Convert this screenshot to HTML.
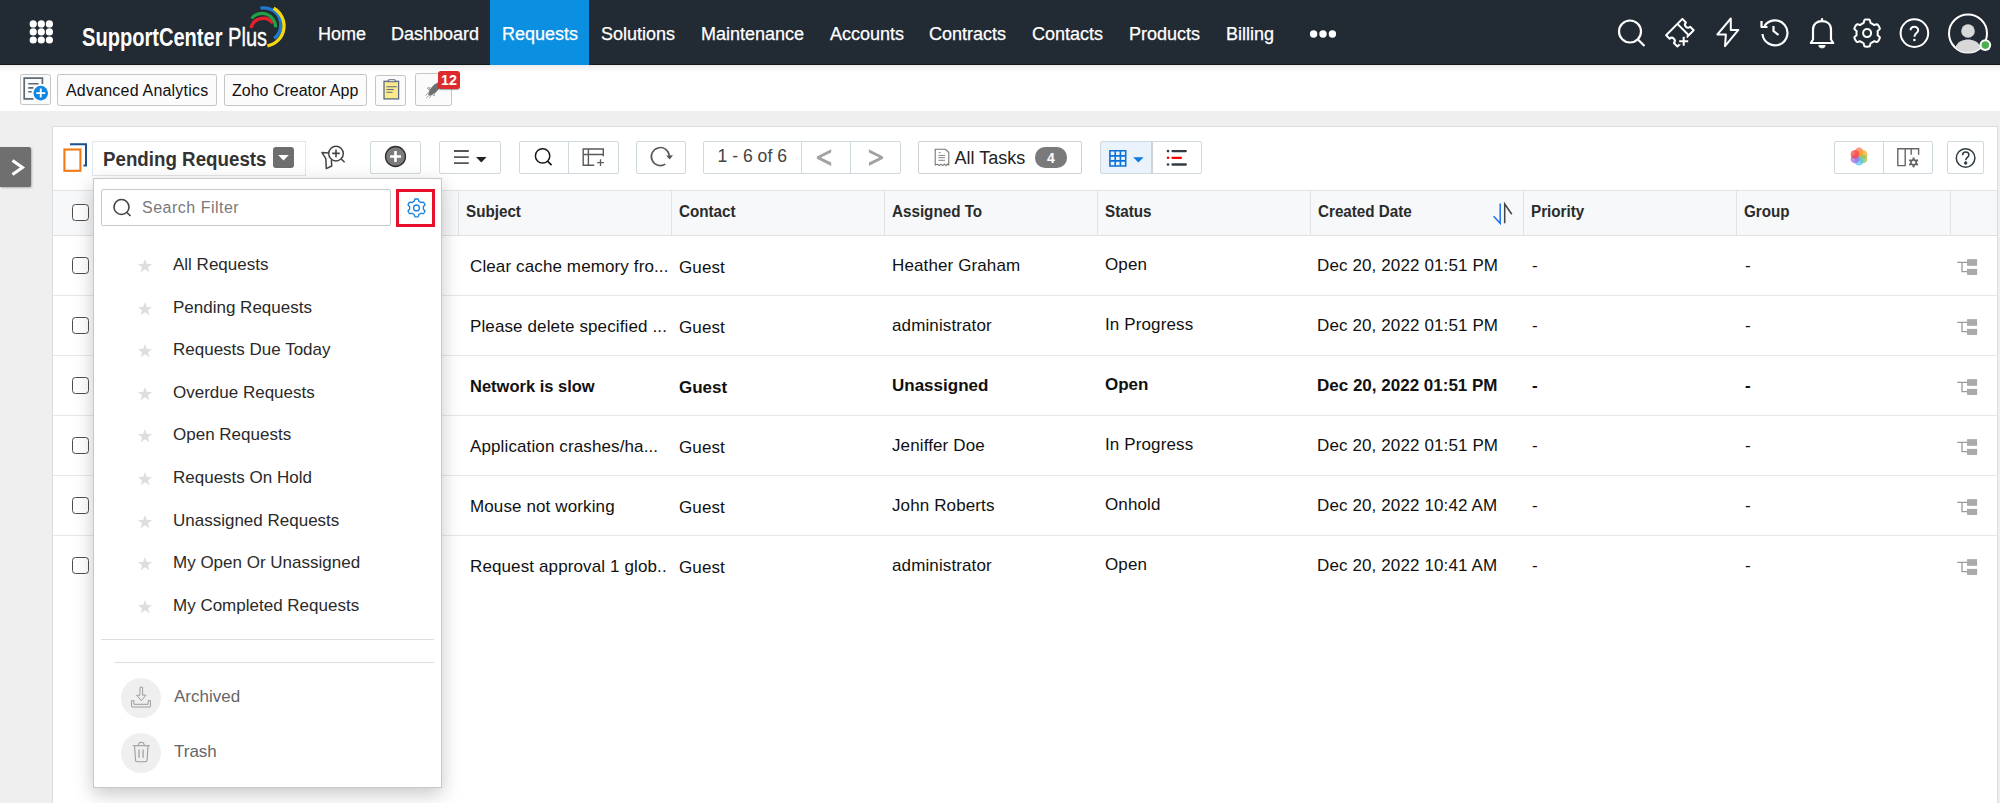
<!DOCTYPE html>
<html><head><meta charset="utf-8">
<style>
*{box-sizing:border-box;margin:0;padding:0}
html,body{width:2000px;height:803px;overflow:hidden;background:#efefef;font-family:"Liberation Sans",sans-serif;color:#222;position:relative}
.a{position:absolute}
.t{position:absolute;white-space:nowrap;line-height:1}
#hdr{left:0;top:0;width:2000px;height:65px;background:#222a33;border-bottom:1px solid #11161b}
.nav{color:#fff;font-size:18px;top:25px;-webkit-text-stroke:.25px #fff}
#tb{left:0;top:65px;width:2000px;height:46px;background:linear-gradient(#ececec,#fff 7px)}
.btn{position:absolute;border:1px solid #c6c6c6;border-radius:2.5px;background:#fbfbfb;box-shadow:0 0 1px rgba(0,0,0,.08)}
#panel{left:52px;top:126px;width:1946px;height:700px;background:#fff;border:1px solid #dcdcdc}
.pbtn{position:absolute;border:1.5px solid #d0d9dd;border-radius:2px;background:#fff;top:141px;height:33px}
#thead{left:53px;top:190px;width:1944px;height:46px;background:#f6f8f9;border-top:1px solid #e3e3e3;border-bottom:1px solid #e0e0e0}
.th{font-size:16px;font-weight:700;color:#2b2b2b;top:204px;transform:scaleX(.95);transform-origin:0 0}
.vsep{position:absolute;top:191px;width:1px;height:44px;background:#e3e3e3}
.rsep{position:absolute;left:53px;width:1944px;height:1px;background:#e8e8e8}
.td{font-size:17px;color:#111;letter-spacing:.12px}
.bd{font-weight:700;letter-spacing:0}
.bs{transform:scaleX(.97);transform-origin:0 0}
.cb{position:absolute;left:72px;width:17px;height:17px;border:1.8px solid #4d4d4d;border-radius:3.5px;background:#fff}
#pop{left:93px;top:178px;width:349px;height:610px;background:#fff;border:1px solid #c8c8c8;box-shadow:0 6px 18px rgba(0,0,0,.22)}
.li{font-size:17px;color:#2a2a2a;left:173px}
.star{position:absolute;left:136.5px;width:16px;height:16px}
</style></head><body>
<!-- HEADER -->
<div id="hdr" class="a">
<svg class="a" style="left:24px;top:16px" width="34" height="32" viewBox="24 16 34 32" fill="#fff"><circle cx="33.2" cy="23.9" r="3.6"/><circle cx="41.3" cy="23.9" r="3.6"/><circle cx="49.4" cy="23.9" r="3.6"/><circle cx="33.2" cy="31.95" r="3.6"/><circle cx="41.3" cy="31.95" r="3.6"/><circle cx="49.4" cy="31.95" r="3.6"/><circle cx="33.2" cy="40.0" r="3.6"/><circle cx="41.3" cy="40.0" r="3.6"/><circle cx="49.4" cy="40.0" r="3.6"/></svg>
<div class="t" id="logo" style="left:81.5px;top:24.8px;font-size:25px;color:#fff;transform:scaleX(.803);transform-origin:0 0"><b>SupportCenter</b> <span style="-webkit-text-stroke:.35px #fff">Plus</span></div>
<svg class="a" style="left:240px;top:0px" width="60" height="55" viewBox="240 0 60 55" fill="none" stroke-linecap="butt">
<path d="M251 28 A12.3 12.3 0 0 1 272.9 23.3" stroke="#e3202b" stroke-width="3.3"/>
<path d="M251.6 18.5 A13.5 13.5 0 0 1 275.6 27.4" stroke="#1fa045" stroke-width="3.3"/>
<path d="M260.5 8.2 A17 17 0 0 1 274.2 38.4" stroke="#1d7ad0" stroke-width="3.3"/>
<path d="M273.6 8.2 A20.3 20.3 0 0 1 267.4 45.9" stroke="#f5d90f" stroke-width="3.3"/>
</svg>
<div class="a" style="left:490px;top:0;width:99px;height:65px;background:#0b8fe0"></div>
<div class="t nav" style="left:318px">Home</div>
<div class="t nav" style="left:391px">Dashboard</div>
<div class="t nav" style="left:502px">Requests</div>
<div class="t nav" style="left:601px">Solutions</div>
<div class="t nav" style="left:701px">Maintenance</div>
<div class="t nav" style="left:830px">Accounts</div>
<div class="t nav" style="left:929px">Contracts</div>
<div class="t nav" style="left:1032px">Contacts</div>
<div class="t nav" style="left:1129px">Products</div>
<div class="t nav" style="left:1226px">Billing</div>
<svg class="a" style="left:1309px;top:28px" width="28" height="12" viewBox="0 0 28 12" fill="#fff"><circle cx="4.6" cy="6" r="3.7"/><circle cx="14" cy="6" r="3.7"/><circle cx="23.4" cy="6" r="3.7"/></svg>
<!-- right icons -->
<svg class="a" style="left:1615px;top:16px" width="34" height="34" viewBox="0 0 34 34" fill="none" stroke="#fff" stroke-width="2.2"><circle cx="15" cy="15.5" r="11"/><path d="M23 23.5 L29.5 30"/></svg>
<svg class="a" style="left:1660px;top:14px" width="40" height="38" viewBox="1660 14 40 38" fill="none" stroke-width="2" stroke-linejoin="round">
<g transform="translate(1679.9 32.7) rotate(-45) translate(-11.5 -8)" stroke="#fff">
<path d="M0 0 H23 V5 A3 3 0 0 0 23 11 V16 H0 V11 A3 3 0 0 0 0 5 Z"/><path d="M16 0 V16"/>
</g>
<path d="M1683.7 36.2 V46.2 M1678.7 41.2 H1688.7" stroke="#222a33" stroke-width="6"/>
<path d="M1683.7 36.7 V45.7 M1679.2 41.2 H1688.2" stroke="#fff" stroke-width="2"/>
</svg>
<svg class="a" style="left:1713px;top:15px" width="30" height="34" viewBox="0 0 30 34" fill="none" stroke="#fff" stroke-width="2" stroke-linejoin="round"><path d="M17.8 3.5 L4.4 19.4 H12.9 L12 31.2 L25.4 14.9 H17.8 Z"/></svg>
<svg class="a" style="left:1758px;top:16px" width="34" height="32" viewBox="0 0 34 32" fill="none" stroke="#fff" stroke-width="2.2"><path d="M6.5 10 A12.5 12.5 0 1 1 4.5 18"/><path d="M3.5 5 V11 H9.5" stroke-linejoin="round"/><path d="M15.5 10 V15 L20.5 19"/></svg>
<svg class="a" style="left:1808px;top:15px" width="30" height="36" viewBox="0 0 30 36" fill="none" stroke="#fff" stroke-width="2.2" stroke-linejoin="round"><path d="M14 3.2 V6"/><path d="M2.8 28 L5 24.5 V14.5 C5 9 9 6.2 14 6.2 C19 6.2 23 9 23 14.5 V24.5 L25.2 28 Z"/><path d="M10.8 30.6 H17.2 C17.2 33.6 10.8 33.6 10.8 30.6 Z" fill="#fff" stroke-width="1"/></svg>
<svg class="a" style="left:1850px;top:16px" width="34" height="34" viewBox="0 0 34 34" fill="none" stroke="#fff" stroke-width="2" stroke-linejoin="round"><path d="M17.1 3.5 L17.7 3.5 L18.3 3.6 L18.9 3.6 L19.5 3.7 L19.9 4.3 L20.2 5.4 L20.4 6.5 L20.7 7.1 L21.2 7.3 L21.6 7.5 L22.0 7.7 L22.4 7.9 L22.8 8.2 L23.2 8.4 L23.6 8.7 L23.9 9.0 L24.6 8.9 L25.7 8.5 L26.8 8.3 L27.5 8.4 L27.9 8.8 L28.2 9.3 L28.6 9.8 L28.9 10.3 L29.2 10.8 L29.4 11.4 L29.7 11.9 L29.9 12.5 L29.6 13.2 L28.8 14.0 L27.9 14.7 L27.5 15.3 L27.6 15.7 L27.7 16.2 L27.7 16.6 L27.7 17.1 L27.7 17.6 L27.7 18.0 L27.6 18.5 L27.5 18.9 L27.9 19.5 L28.8 20.2 L29.6 21.0 L29.9 21.7 L29.7 22.3 L29.4 22.8 L29.2 23.4 L28.9 23.9 L28.6 24.4 L28.2 24.9 L27.9 25.4 L27.5 25.8 L26.8 25.9 L25.7 25.7 L24.6 25.3 L23.9 25.2 L23.6 25.5 L23.2 25.8 L22.8 26.0 L22.4 26.3 L22.0 26.5 L21.6 26.7 L21.2 26.9 L20.7 27.1 L20.4 27.7 L20.2 28.8 L19.9 29.9 L19.5 30.5 L18.9 30.6 L18.3 30.6 L17.7 30.7 L17.1 30.7 L16.5 30.7 L15.9 30.6 L15.3 30.6 L14.7 30.5 L14.3 29.9 L14.0 28.8 L13.8 27.7 L13.5 27.1 L13.0 26.9 L12.6 26.7 L12.2 26.5 L11.8 26.3 L11.4 26.0 L11.0 25.8 L10.6 25.5 L10.3 25.2 L9.6 25.3 L8.5 25.7 L7.4 25.9 L6.7 25.8 L6.3 25.4 L6.0 24.9 L5.6 24.4 L5.3 23.9 L5.0 23.4 L4.8 22.8 L4.5 22.3 L4.3 21.7 L4.6 21.0 L5.4 20.2 L6.3 19.5 L6.7 18.9 L6.6 18.5 L6.5 18.0 L6.5 17.6 L6.5 17.1 L6.5 16.6 L6.5 16.2 L6.6 15.7 L6.7 15.3 L6.3 14.7 L5.4 14.0 L4.6 13.2 L4.3 12.5 L4.5 11.9 L4.8 11.4 L5.0 10.8 L5.3 10.3 L5.6 9.8 L6.0 9.3 L6.3 8.8 L6.7 8.4 L7.4 8.3 L8.5 8.5 L9.6 8.9 L10.3 9.0 L10.6 8.7 L11.0 8.4 L11.4 8.2 L11.8 7.9 L12.2 7.7 L12.6 7.5 L13.0 7.3 L13.5 7.1 L13.8 6.5 L14.0 5.4 L14.3 4.3 L14.7 3.7 L15.3 3.6 L15.9 3.6 L16.5 3.5Z"/><circle cx="17.1" cy="17.1" r="4"/></svg>
<svg class="a" style="left:1898px;top:17px" width="34" height="34" viewBox="0 0 34 34" fill="none" stroke="#fff" stroke-width="2"><circle cx="16.4" cy="16.1" r="13.8"/><path d="M12.6 13.3 C12.6 10.9 14.3 9.7 16.4 9.7 C18.5 9.7 20.2 11.2 20.2 13.2 C20.2 16 16.4 16.2 16.4 19.8"/><circle cx="16.4" cy="23" r="1.3" fill="#fff" stroke="none"/></svg>
<svg class="a" style="left:1945px;top:11px" width="50" height="46" viewBox="0 0 50 46"><circle cx="23" cy="22.5" r="19" fill="none" stroke="#fff" stroke-width="2"/><circle cx="23" cy="20" r="6.8" fill="#d8d8d8"/><path d="M10.2 36.5 C12.5 30.5 18 28.5 23 28.5 C28 28.5 33.5 30.5 35.8 36.5 C32 40 28 41.5 23 41.5 C18 41.5 14 40 10.2 36.5Z" fill="#d8d8d8"/><circle cx="40.3" cy="34.1" r="5.9" fill="#fff"/><circle cx="40.3" cy="34.1" r="3.8" fill="#4caf50"/></svg>
</div>
<!-- TOOLBAR -->
<div id="tb" class="a">
<div class="btn" style="left:20px;top:9px;width:31px;height:31px"></div>
<div class="btn" style="left:57px;top:9px;width:160px;height:32px"></div>
<div class="t" style="left:66px;top:18px;font-size:16px;color:#111;letter-spacing:.2px">Advanced Analytics</div>
<div class="btn" style="left:224px;top:9px;width:143px;height:32px"></div>
<div class="t" style="left:232px;top:18px;font-size:16px;color:#111">Zoho Creator App</div>
<div class="btn" style="left:375px;top:10px;width:31px;height:31px"></div>
<div class="btn" style="left:415px;top:8px;width:37px;height:33px"></div>
</div>
<!-- toolbar icons -->
<svg class="a" style="left:15px;top:66px" width="40" height="44" viewBox="15 66 40 44">
<path d="M42.4 84 V78.2 H24.2 V98.8 H33.5" fill="none" stroke="#5f6b74" stroke-width="1.7"/>
<path d="M28.2 83.8 H38.6 M28.2 87.9 H33.4 M28.2 91.8 H31.7" stroke="#5f6b74" stroke-width="1.6"/>
<circle cx="40.75" cy="93.1" r="8.3" fill="#fff"/>
<circle cx="40.75" cy="93.1" r="7.3" fill="#0f87e0"/>
<path d="M40.75 88.6 V97.6 M36.25 93.1 H45.25" stroke="#fff" stroke-width="1.9"/>
</svg>
<svg class="a" style="left:375px;top:70px" width="32" height="36" viewBox="375 70 32 36">
<rect x="384" y="81.3" width="14.6" height="17.6" fill="#fbe98c" stroke="#5c6b80" stroke-width="1.3"/>
<path d="M388 81.8 L388.8 79.8 H394.8 L395.6 81.8 Z" fill="#fff" stroke="#5c6b80" stroke-width="1.1"/>
<path d="M386.5 86.7 H396.7 M386.5 89.5 H393.9 M386.5 92.2 H392.6" stroke="#5c6b80" stroke-width="1.1"/>
</svg>
<svg class="a" style="left:415px;top:70px" width="40" height="36" viewBox="415 70 40 36">
<ellipse cx="434.5" cy="89" rx="8.5" ry="3.3" transform="rotate(-48 434.5 89)" fill="#6f6f6f"/>
<path d="M430 87.6 L427.2 88 L429.2 90.2 Z M434 93.2 L434.4 96 L432.2 94.3 Z" fill="#fff" stroke="#8a8a8a" stroke-width=".8"/>
<path d="M425.4 95.6 L428.4 92.8 M426.2 98 L429.4 95 M429 98.2 L431 96.2" stroke="#9a9a9a" stroke-width=".9"/>
</svg>
<div class="a" style="left:438px;top:71px;width:22px;height:18px;background:#dc2a2e;border-radius:3px;box-shadow:0 1px 1px rgba(0,0,0,.35)"></div>
<div class="t" style="left:441px;top:71.5px;font-size:15.5px;font-weight:700;color:#fff;transform:scaleX(.92);transform-origin:0 0">12</div>
<!-- PANEL -->
<div id="panel" class="a"></div>
<!-- sidebar toggle -->
<div class="a" style="left:0;top:147px;width:31px;height:40px;background:#6f6f6f;border-radius:0 2px 2px 0;box-shadow:1px 1px 2px rgba(0,0,0,.25)"></div>
<svg class="a" style="left:0;top:140px" width="40" height="50" viewBox="0 140 40 50"><path d="M12.5 160.5 L22.5 167.5 L12.5 174.5" fill="none" stroke="#fff" stroke-width="3"/></svg>
<!-- page icon -->
<svg class="a" style="left:55px;top:136px" width="40" height="42" viewBox="55 136 40 42">
<path d="M70 144.3 H86 V165.5 H83.5" fill="none" stroke="#1d4f91" stroke-width="2"/>
<rect x="64.4" y="149.5" width="16" height="21.3" fill="none" stroke="#f27a16" stroke-width="2.1"/>
</svg>
<!-- pending requests selector -->
<div class="a" style="left:92px;top:141px;width:214px;height:35px;border:1px solid #e3e7ea;background:#fff"></div>
<div class="t" id="pr" style="left:103px;top:149px;font-size:20px;font-weight:700;color:#333;transform:scaleX(.937);transform-origin:0 0">Pending Requests</div>
<div class="a" style="left:273px;top:147px;width:21px;height:21px;background:#6e6e6e;border-radius:3px"></div>
<svg class="a" style="left:273px;top:147px" width="21" height="21" viewBox="0 0 21 21"><path d="M5.2 8 H15.8 L10.5 13.6Z" fill="#fff"/></svg>
<!-- filter search icon -->
<svg class="a" style="left:315px;top:138px" width="35" height="40" viewBox="315 138 35 40" fill="none" stroke="#444" stroke-width="1.5" stroke-linejoin="round">
<circle cx="336" cy="153.6" r="7.3"/><path d="M341.2 159 L344.6 162.3"/><path d="M336 149.5 V157.2 M332.2 153.4 H339.8" stroke-width="1.6"/>
<path d="M328.9 153 L322 152.6 L325.8 158.6 L326.3 168.6 L331.7 166 L331.4 160"/>
</svg>
<!-- add button -->
<div class="pbtn" style="left:370px;width:51px"></div>
<svg class="a" style="left:383px;top:145px" width="25" height="25" viewBox="0 0 25 25"><circle cx="12.5" cy="11.5" r="10" fill="#7b7b7b" stroke="#2f2f2f" stroke-width="1.3"/><path d="M12.5 6 V17 M7 11.5 H18" stroke="#fff" stroke-width="2.6"/></svg>
<!-- menu button -->
<div class="pbtn" style="left:439px;width:62px"></div>
<svg class="a" style="left:439px;top:141px" width="62" height="33" viewBox="439 141 62 33"><path d="M454 151 H468.8 M454 157.1 H468.8 M454 163.2 H468.8" stroke="#555" stroke-width="1.8"/><path d="M476 157 H486.6 L481.3 162.4Z" fill="#222"/></svg>
<!-- search + table group -->
<div class="pbtn" style="left:519px;width:100px"></div>
<div class="a" style="left:568px;top:142px;width:1px;height:31px;background:#cfd8dc"></div>
<svg class="a" style="left:519px;top:141px" width="100" height="33" viewBox="519 141 100 33" fill="none">
<circle cx="542.6" cy="155.9" r="7.2" stroke="#1a1a1a" stroke-width="1.5"/><path d="M547.7 161.3 L551.6 165.2" stroke="#1a1a1a" stroke-width="1.7"/>
<path d="M603.3 156.2 V149 H583.2 V165.2 H594.2 M588.4 149 V165.2 M583.2 154.5 H603.3" stroke="#5a5a5a" stroke-width="1.4"/>
<path d="M600.5 159.3 V165.9 M597.2 162.6 H603.8" stroke="#5a5a5a" stroke-width="1.3"/>
</svg>
<!-- refresh -->
<div class="pbtn" style="left:636px;width:50px"></div>
<svg class="a" style="left:636px;top:141px" width="50" height="33" viewBox="636 141 50 33" fill="none"><path d="M665.3 164.1 A9 9 0 1 1 669.3 155.6" stroke="#555" stroke-width="1.6"/><path d="M666.1 155.4 L673 155.2 L669.6 159.6 Z" fill="#555"/></svg>
<!-- pager -->
<div class="pbtn" style="left:703px;width:198px"></div>
<div class="a" style="left:801px;top:142px;width:1px;height:31px;background:#cfd8dc"></div>
<div class="a" style="left:850px;top:142px;width:1px;height:31px;background:#cfd8dc"></div>
<div class="t" style="left:717.5px;top:148px;font-size:17.6px;color:#444">1 - 6 of 6</div>
<svg class="a" style="left:801px;top:141px" width="100" height="33" viewBox="801 141 100 33"><path d="M831.2 149.3 L816.9 156.4 V158.8 L831.2 165.9 V162.6 L820.9 157.6 L831.2 152.6 Z M868.9 149.3 L883 156.4 V158.8 L868.9 165.9 V162.6 L879.2 157.6 L868.9 152.6 Z" fill="#a2a2a2"/></svg>
<!-- all tasks -->
<div class="pbtn" style="left:918px;width:164px;border-color:#cfcfcf"></div>
<svg class="a" style="left:930px;top:145px" width="24" height="24" viewBox="930 145 24 24" fill="none" stroke="#777" stroke-width="1.1" stroke-linejoin="round"><path d="M935.2 149.3 H945.6 L948.8 152.5 V165 L947.5 164 L946 165.6 L944.4 164.2 L942.6 165.6 L941 164.2 L939.4 165.6 L937.6 164.2 L935.2 165 Z"/><path d="M938.8 152.6 H940.6 M938.4 155.4 H945 M938.4 157.7 H945 M938.4 160.3 H945" stroke-width=".9"/></svg>
<div class="t" style="left:954.5px;top:149px;font-size:18px;color:#222">All Tasks</div>
<div class="a" style="left:1035px;top:147px;width:32px;height:20.5px;border-radius:10px;background:#7a7a7a"></div>
<div class="t" style="left:1047px;top:151px;font-size:14px;font-weight:700;color:#fff">4</div>
<!-- view toggle -->
<div class="pbtn" style="left:1100px;width:102px;background:linear-gradient(90deg,#eaf2fb 51px,#fff 51px)"></div>
<div class="a" style="left:1151px;top:142px;width:1.5px;height:31px;background:#cdd5da"></div>
<svg class="a" style="left:1100px;top:141px" width="102" height="33" viewBox="1100 141 102 33" fill="none">
<path d="M1109.9 150.8 H1125.7 V166 H1109.9 Z M1109.9 155.9 H1125.7 M1109.9 160.9 H1125.7 M1115.2 150.8 V166 M1120.4 150.8 V166" stroke="#0a72d9" stroke-width="1.6"/>
<path d="M1133.2 157.3 H1143.6 L1138.4 162.4 Z" fill="#0e7ae0"/>
<circle cx="1168" cy="151.1" r="1.3" fill="#333d44"/><circle cx="1168" cy="157.8" r="1.3" fill="#f00"/><circle cx="1168" cy="164.5" r="1.3" fill="#333d44"/>
<path d="M1172.5 151.1 H1185.8 M1172.5 164.5 H1185.8" stroke="#333d44" stroke-width="2.3" stroke-linecap="round"/>
<path d="M1172.5 157.8 H1181" stroke="#f00" stroke-width="2.3" stroke-linecap="round"/>
</svg>
<!-- right buttons -->
<div class="pbtn" style="left:1834px;width:99px"></div>
<div class="a" style="left:1883px;top:142px;width:1px;height:31px;background:#cfd8dc"></div>
<svg class="a" style="left:1834px;top:141px" width="99" height="33" viewBox="1834 141 99 33">
<circle cx="1859.00" cy="152.00" r="4.4" fill="#ff7043" opacity=".72"/><circle cx="1862.98" cy="154.30" r="4.4" fill="#ffa726" opacity=".72"/><circle cx="1862.98" cy="158.90" r="4.4" fill="#8bc34a" opacity=".72"/><circle cx="1859.00" cy="161.20" r="4.4" fill="#4fc3f7" opacity=".72"/><circle cx="1855.02" cy="158.90" r="4.4" fill="#9c6ade" opacity=".72"/><circle cx="1855.02" cy="154.30" r="4.4" fill="#f4433a" opacity=".72"/>
<path d="M1897.8 148.8 H1905.2 V165.6 H1897.8 Z M1905.2 148.8 H1918.6 V154.8 M1911.2 148.8 V154.8" fill="none" stroke="#666" stroke-width="1.4"/>
<path d="M1913.60 157.40 L1913.93 157.41 L1914.25 157.44 L1914.56 157.58 L1914.69 158.34 L1914.72 159.09 L1914.90 159.26 L1915.10 159.35 L1915.30 159.46 L1915.49 159.57 L1915.67 159.70 L1915.90 159.78 L1916.57 159.43 L1917.29 159.16 L1917.57 159.36 L1917.76 159.62 L1917.93 159.90 L1918.08 160.19 L1918.22 160.49 L1918.25 160.82 L1917.66 161.31 L1917.02 161.72 L1916.97 161.96 L1916.99 162.18 L1917.00 162.40 L1916.99 162.62 L1916.97 162.84 L1917.02 163.08 L1917.66 163.49 L1918.25 163.98 L1918.22 164.31 L1918.08 164.61 L1917.93 164.90 L1917.76 165.18 L1917.57 165.44 L1917.29 165.64 L1916.57 165.37 L1915.90 165.02 L1915.67 165.10 L1915.49 165.23 L1915.30 165.34 L1915.10 165.45 L1914.90 165.54 L1914.72 165.71 L1914.69 166.46 L1914.56 167.22 L1914.25 167.36 L1913.93 167.39 L1913.60 167.40 L1913.27 167.39 L1912.95 167.36 L1912.64 167.22 L1912.51 166.46 L1912.48 165.71 L1912.30 165.54 L1912.10 165.45 L1911.90 165.34 L1911.71 165.23 L1911.53 165.10 L1911.30 165.02 L1910.63 165.37 L1909.91 165.64 L1909.63 165.44 L1909.44 165.18 L1909.27 164.90 L1909.12 164.61 L1908.98 164.31 L1908.95 163.98 L1909.54 163.49 L1910.18 163.08 L1910.23 162.84 L1910.21 162.62 L1910.20 162.40 L1910.21 162.18 L1910.23 161.96 L1910.18 161.72 L1909.54 161.31 L1908.95 160.82 L1908.98 160.49 L1909.12 160.19 L1909.27 159.90 L1909.44 159.62 L1909.63 159.36 L1909.91 159.16 L1910.63 159.43 L1911.30 159.78 L1911.53 159.70 L1911.71 159.57 L1911.90 159.46 L1912.10 159.35 L1912.30 159.26 L1912.48 159.09 L1912.51 158.34 L1912.64 157.58 L1912.95 157.44 L1913.27 157.41Z" fill="#666"/><circle cx="1913.6" cy="162.4" r="1.7" fill="#fff"/>
</svg>
<div class="pbtn" style="left:1947px;width:37px"></div>
<svg class="a" style="left:1947px;top:141px" width="37" height="33" viewBox="1947 141 37 33" fill="none" stroke="#2d3a40" stroke-width="1.5"><circle cx="1965.6" cy="158" r="9.3"/><path d="M1962.6 155.2 C1962.6 153 1964 152 1965.7 152 C1967.6 152 1968.9 153.3 1968.9 154.9 C1968.9 157.3 1965.7 157.4 1965.7 160.3"/><circle cx="1965.7" cy="163" r=".9" fill="#2d3a40"/></svg>
<!-- TABLE -->
<div id="thead" class="a"></div>
<div class="cb" style="top:204px"></div>
<div class="vsep" style="left:458px"></div>
<div class="vsep" style="left:671px"></div>
<div class="vsep" style="left:884px"></div>
<div class="vsep" style="left:1097px"></div>
<div class="vsep" style="left:1310px"></div>
<div class="vsep" style="left:1523px"></div>
<div class="vsep" style="left:1736px"></div>
<div class="vsep" style="left:1950px"></div>
<div class="t th" style="left:466px">Subject</div>
<div class="t th" style="left:679px">Contact</div>
<div class="t th" style="left:892px">Assigned To</div>
<div class="t th" style="left:1105px">Status</div>
<div class="t th" style="left:1318px">Created Date</div>
<div class="t th" style="left:1531px">Priority</div>
<div class="t th" style="left:1744px">Group</div>
<svg class="a" style="left:1491px;top:201px" width="24" height="24" viewBox="0 0 24 24" fill="none" stroke-width="1.5"><path d="M9.2 2.5 V22.3 L2.6 15.2" stroke="#1a73e8"/><path d="M13.7 22.3 V3 L20.8 13.2" stroke="#444"/></svg>
<div class="rsep" style="top:295px"></div>
<div class="cb" style="top:257px"></div>
<div class="t td" style="left:470px;top:258px">Clear cache memory fro...</div>
<div class="t td" style="left:679px;top:259px">Guest</div>
<div class="t td" style="left:892px;top:257px">Heather Graham</div>
<div class="t td" style="left:1105px;top:255.7px">Open</div>
<div class="t td" style="left:1317px;top:256.5px">Dec 20, 2022 01:51 PM</div>
<div class="t td" style="left:1532px;top:257px">-</div>
<div class="t td" style="left:1745px;top:257px">-</div>
<svg class="a" style="left:1956px;top:258px" width="22" height="18" viewBox="0 0 22 18"><path d="M1.2 4.4 H11.2 M6 4.4 V13.7 H11.2" stroke="#9a9a9a" stroke-width="1.3" fill="none"/><rect x="11.4" y="1.7" width="9.4" height="5.6" fill="#a9abaa" stroke="#979998" stroke-width=".6"/><rect x="11.4" y="11.2" width="9.4" height="5.4" fill="#a9abaa" stroke="#979998" stroke-width=".6"/></svg>
<div class="rsep" style="top:355px"></div>
<div class="cb" style="top:317px"></div>
<div class="t td" style="left:470px;top:318px">Please delete specified ...</div>
<div class="t td" style="left:679px;top:319px">Guest</div>
<div class="t td" style="left:892px;top:317px">administrator</div>
<div class="t td" style="left:1105px;top:315.7px">In Progress</div>
<div class="t td" style="left:1317px;top:316.5px">Dec 20, 2022 01:51 PM</div>
<div class="t td" style="left:1532px;top:317px">-</div>
<div class="t td" style="left:1745px;top:317px">-</div>
<svg class="a" style="left:1956px;top:318px" width="22" height="18" viewBox="0 0 22 18"><path d="M1.2 4.4 H11.2 M6 4.4 V13.7 H11.2" stroke="#9a9a9a" stroke-width="1.3" fill="none"/><rect x="11.4" y="1.7" width="9.4" height="5.6" fill="#a9abaa" stroke="#979998" stroke-width=".6"/><rect x="11.4" y="11.2" width="9.4" height="5.4" fill="#a9abaa" stroke="#979998" stroke-width=".6"/></svg>
<div class="rsep" style="top:415px"></div>
<div class="cb" style="top:377px"></div>
<div class="t td bd bs" style="left:470px;top:378px">Network is slow</div>
<div class="t td bd" style="left:679px;top:379px">Guest</div>
<div class="t td bd" style="left:892px;top:377px">Unassigned</div>
<div class="t td bd" style="left:1105px;top:375.7px">Open</div>
<div class="t td bd" style="left:1317px;top:376.5px">Dec 20, 2022 01:51 PM</div>
<div class="t td bd" style="left:1532px;top:377px">-</div>
<div class="t td bd" style="left:1745px;top:377px">-</div>
<svg class="a" style="left:1956px;top:378px" width="22" height="18" viewBox="0 0 22 18"><path d="M1.2 4.4 H11.2 M6 4.4 V13.7 H11.2" stroke="#9a9a9a" stroke-width="1.3" fill="none"/><rect x="11.4" y="1.7" width="9.4" height="5.6" fill="#a9abaa" stroke="#979998" stroke-width=".6"/><rect x="11.4" y="11.2" width="9.4" height="5.4" fill="#a9abaa" stroke="#979998" stroke-width=".6"/></svg>
<div class="rsep" style="top:475px"></div>
<div class="cb" style="top:437px"></div>
<div class="t td" style="left:470px;top:438px">Application crashes/ha...</div>
<div class="t td" style="left:679px;top:439px">Guest</div>
<div class="t td" style="left:892px;top:437px">Jeniffer Doe</div>
<div class="t td" style="left:1105px;top:435.7px">In Progress</div>
<div class="t td" style="left:1317px;top:436.5px">Dec 20, 2022 01:51 PM</div>
<div class="t td" style="left:1532px;top:437px">-</div>
<div class="t td" style="left:1745px;top:437px">-</div>
<svg class="a" style="left:1956px;top:438px" width="22" height="18" viewBox="0 0 22 18"><path d="M1.2 4.4 H11.2 M6 4.4 V13.7 H11.2" stroke="#9a9a9a" stroke-width="1.3" fill="none"/><rect x="11.4" y="1.7" width="9.4" height="5.6" fill="#a9abaa" stroke="#979998" stroke-width=".6"/><rect x="11.4" y="11.2" width="9.4" height="5.4" fill="#a9abaa" stroke="#979998" stroke-width=".6"/></svg>
<div class="rsep" style="top:535px"></div>
<div class="cb" style="top:497px"></div>
<div class="t td" style="left:470px;top:498px">Mouse not working</div>
<div class="t td" style="left:679px;top:499px">Guest</div>
<div class="t td" style="left:892px;top:497px">John Roberts</div>
<div class="t td" style="left:1105px;top:495.7px">Onhold</div>
<div class="t td" style="left:1317px;top:496.5px">Dec 20, 2022 10:42 AM</div>
<div class="t td" style="left:1532px;top:497px">-</div>
<div class="t td" style="left:1745px;top:497px">-</div>
<svg class="a" style="left:1956px;top:498px" width="22" height="18" viewBox="0 0 22 18"><path d="M1.2 4.4 H11.2 M6 4.4 V13.7 H11.2" stroke="#9a9a9a" stroke-width="1.3" fill="none"/><rect x="11.4" y="1.7" width="9.4" height="5.6" fill="#a9abaa" stroke="#979998" stroke-width=".6"/><rect x="11.4" y="11.2" width="9.4" height="5.4" fill="#a9abaa" stroke="#979998" stroke-width=".6"/></svg>
<div class="cb" style="top:557px"></div>
<div class="t td" style="left:470px;top:558px">Request approval 1 glob..</div>
<div class="t td" style="left:679px;top:559px">Guest</div>
<div class="t td" style="left:892px;top:557px">administrator</div>
<div class="t td" style="left:1105px;top:555.7px">Open</div>
<div class="t td" style="left:1317px;top:556.5px">Dec 20, 2022 10:41 AM</div>
<div class="t td" style="left:1532px;top:557px">-</div>
<div class="t td" style="left:1745px;top:557px">-</div>
<svg class="a" style="left:1956px;top:558px" width="22" height="18" viewBox="0 0 22 18"><path d="M1.2 4.4 H11.2 M6 4.4 V13.7 H11.2" stroke="#9a9a9a" stroke-width="1.3" fill="none"/><rect x="11.4" y="1.7" width="9.4" height="5.6" fill="#a9abaa" stroke="#979998" stroke-width=".6"/><rect x="11.4" y="11.2" width="9.4" height="5.4" fill="#a9abaa" stroke="#979998" stroke-width=".6"/></svg>
<!-- POPUP -->
<div id="pop" class="a"></div>
<div class="a" style="left:101px;top:188.5px;width:290px;height:37px;border:1.5px solid #c9c9c9;border-radius:2px;background:#fff"></div>
<svg class="a" style="left:110px;top:196px" width="24" height="24" viewBox="0 0 24 24" fill="none" stroke="#444" stroke-width="1.6"><circle cx="11.5" cy="11" r="7.5"/><path d="M17 16.5 L20.5 20"/></svg>
<div class="t" style="left:142px;top:200px;font-size:16px;color:#7a7a7a;letter-spacing:.5px">Search Filter</div>
<div class="a" style="left:396px;top:189px;width:39px;height:37.5px;border:3px solid #e8112d"></div>
<svg class="a" style="left:400px;top:192px" width="32" height="32" viewBox="400 192 32 32" fill="none" stroke="#1e86de" stroke-width="1.4" stroke-linejoin="round"><path d="M416.50 198.90 L417.28 198.93 L418.06 199.04 L418.56 200.22 L418.86 201.41 L419.42 201.65 L419.95 201.92 L420.46 202.25 L420.94 202.61 L422.12 202.28 L423.39 202.12 L423.87 202.74 L424.29 203.40 L424.66 204.10 L424.95 204.82 L424.18 205.84 L423.30 206.70 L423.37 207.30 L423.40 207.90 L423.37 208.50 L423.30 209.10 L424.18 209.96 L424.95 210.98 L424.66 211.70 L424.29 212.40 L423.87 213.06 L423.39 213.68 L422.12 213.52 L420.94 213.19 L420.46 213.55 L419.95 213.88 L419.42 214.15 L418.86 214.39 L418.56 215.58 L418.06 216.76 L417.28 216.87 L416.50 216.90 L415.72 216.87 L414.94 216.76 L414.44 215.58 L414.14 214.39 L413.58 214.15 L413.05 213.88 L412.54 213.55 L412.06 213.19 L410.88 213.52 L409.61 213.68 L409.13 213.06 L408.71 212.40 L408.34 211.70 L408.05 210.98 L408.82 209.96 L409.70 209.10 L409.63 208.50 L409.60 207.90 L409.63 207.30 L409.70 206.70 L408.82 205.84 L408.05 204.82 L408.34 204.10 L408.71 203.40 L409.13 202.74 L409.61 202.12 L410.88 202.28 L412.06 202.61 L412.54 202.25 L413.05 201.92 L413.58 201.65 L414.14 201.41 L414.44 200.22 L414.94 199.04 L415.72 198.93Z"/><circle cx="416.5" cy="207.9" r="2.9"/></svg>
<svg class="star" style="top:258.0px" viewBox="0 0 24 24"><path d="M12 1.5 L14.8 9 H22.8 L16.4 13.8 L18.8 21.5 L12 16.8 L5.2 21.5 L7.6 13.8 L1.2 9 H9.2Z" fill="#dedede"/></svg>
<div class="t li" style="top:256.0px">All Requests</div>
<svg class="star" style="top:300.6px" viewBox="0 0 24 24"><path d="M12 1.5 L14.8 9 H22.8 L16.4 13.8 L18.8 21.5 L12 16.8 L5.2 21.5 L7.6 13.8 L1.2 9 H9.2Z" fill="#dedede"/></svg>
<div class="t li" style="top:298.6px">Pending Requests</div>
<svg class="star" style="top:343.2px" viewBox="0 0 24 24"><path d="M12 1.5 L14.8 9 H22.8 L16.4 13.8 L18.8 21.5 L12 16.8 L5.2 21.5 L7.6 13.8 L1.2 9 H9.2Z" fill="#dedede"/></svg>
<div class="t li" style="top:341.2px">Requests Due Today</div>
<svg class="star" style="top:385.8px" viewBox="0 0 24 24"><path d="M12 1.5 L14.8 9 H22.8 L16.4 13.8 L18.8 21.5 L12 16.8 L5.2 21.5 L7.6 13.8 L1.2 9 H9.2Z" fill="#dedede"/></svg>
<div class="t li" style="top:383.8px">Overdue Requests</div>
<svg class="star" style="top:428.4px" viewBox="0 0 24 24"><path d="M12 1.5 L14.8 9 H22.8 L16.4 13.8 L18.8 21.5 L12 16.8 L5.2 21.5 L7.6 13.8 L1.2 9 H9.2Z" fill="#dedede"/></svg>
<div class="t li" style="top:426.4px">Open Requests</div>
<svg class="star" style="top:471.0px" viewBox="0 0 24 24"><path d="M12 1.5 L14.8 9 H22.8 L16.4 13.8 L18.8 21.5 L12 16.8 L5.2 21.5 L7.6 13.8 L1.2 9 H9.2Z" fill="#dedede"/></svg>
<div class="t li" style="top:469.0px">Requests On Hold</div>
<svg class="star" style="top:513.6px" viewBox="0 0 24 24"><path d="M12 1.5 L14.8 9 H22.8 L16.4 13.8 L18.8 21.5 L12 16.8 L5.2 21.5 L7.6 13.8 L1.2 9 H9.2Z" fill="#dedede"/></svg>
<div class="t li" style="top:511.6px">Unassigned Requests</div>
<svg class="star" style="top:556.2px" viewBox="0 0 24 24"><path d="M12 1.5 L14.8 9 H22.8 L16.4 13.8 L18.8 21.5 L12 16.8 L5.2 21.5 L7.6 13.8 L1.2 9 H9.2Z" fill="#dedede"/></svg>
<div class="t li" style="top:554.2px">My Open Or Unassigned</div>
<svg class="star" style="top:598.8px" viewBox="0 0 24 24"><path d="M12 1.5 L14.8 9 H22.8 L16.4 13.8 L18.8 21.5 L12 16.8 L5.2 21.5 L7.6 13.8 L1.2 9 H9.2Z" fill="#dedede"/></svg>
<div class="t li" style="top:596.8px">My Completed Requests</div>
<div class="a" style="left:101px;top:639px;width:333px;height:1px;background:#dedede"></div>
<div class="a" style="left:114px;top:662px;width:320px;height:1px;background:#dedede"></div>
<div class="a" style="left:121px;top:678px;width:40px;height:40px;border-radius:50%;background:#efefef"></div>
<svg class="a" style="left:125px;top:682px" width="32" height="32" viewBox="125 682 32 32" fill="none" stroke="#9c9c9c" stroke-width="1" stroke-linejoin="round"><path d="M140 687.2 H142.6 V695.2 H146 L141.3 700.6 L136.6 695.2 H140 Z"/><path d="M131.6 700.6 H133.9 V704.3 H148.1 V700.6 H150.4 V706.6 Q150.4 707 150 707 H132 Q131.6 707 131.6 706.6 Z"/></svg>
<div class="t" style="left:174px;top:688px;font-size:17px;color:#666">Archived</div>
<div class="a" style="left:121px;top:733px;width:40px;height:40px;border-radius:50%;background:#efefef"></div>
<svg class="a" style="left:125px;top:737px" width="32" height="32" viewBox="125 737 32 32" fill="none" stroke="#9c9c9c" stroke-width="1.1" stroke-linejoin="round"><path d="M134.6 746 L135.5 760.3 Q135.7 761.8 137.2 761.8 H145.4 Q146.9 761.8 147.1 760.3 L148 746"/><path d="M132.8 745.7 H149.8"/><path d="M138.4 745.5 Q138.4 742.2 141.3 742.2 Q144.2 742.2 144.2 745.5"/><path d="M139 749.5 V757.8 M143.1 749.5 V757.8" stroke-width="1.2"/></svg>
<div class="t" style="left:174px;top:743px;font-size:17px;color:#666">Trash</div>

</body></html>
